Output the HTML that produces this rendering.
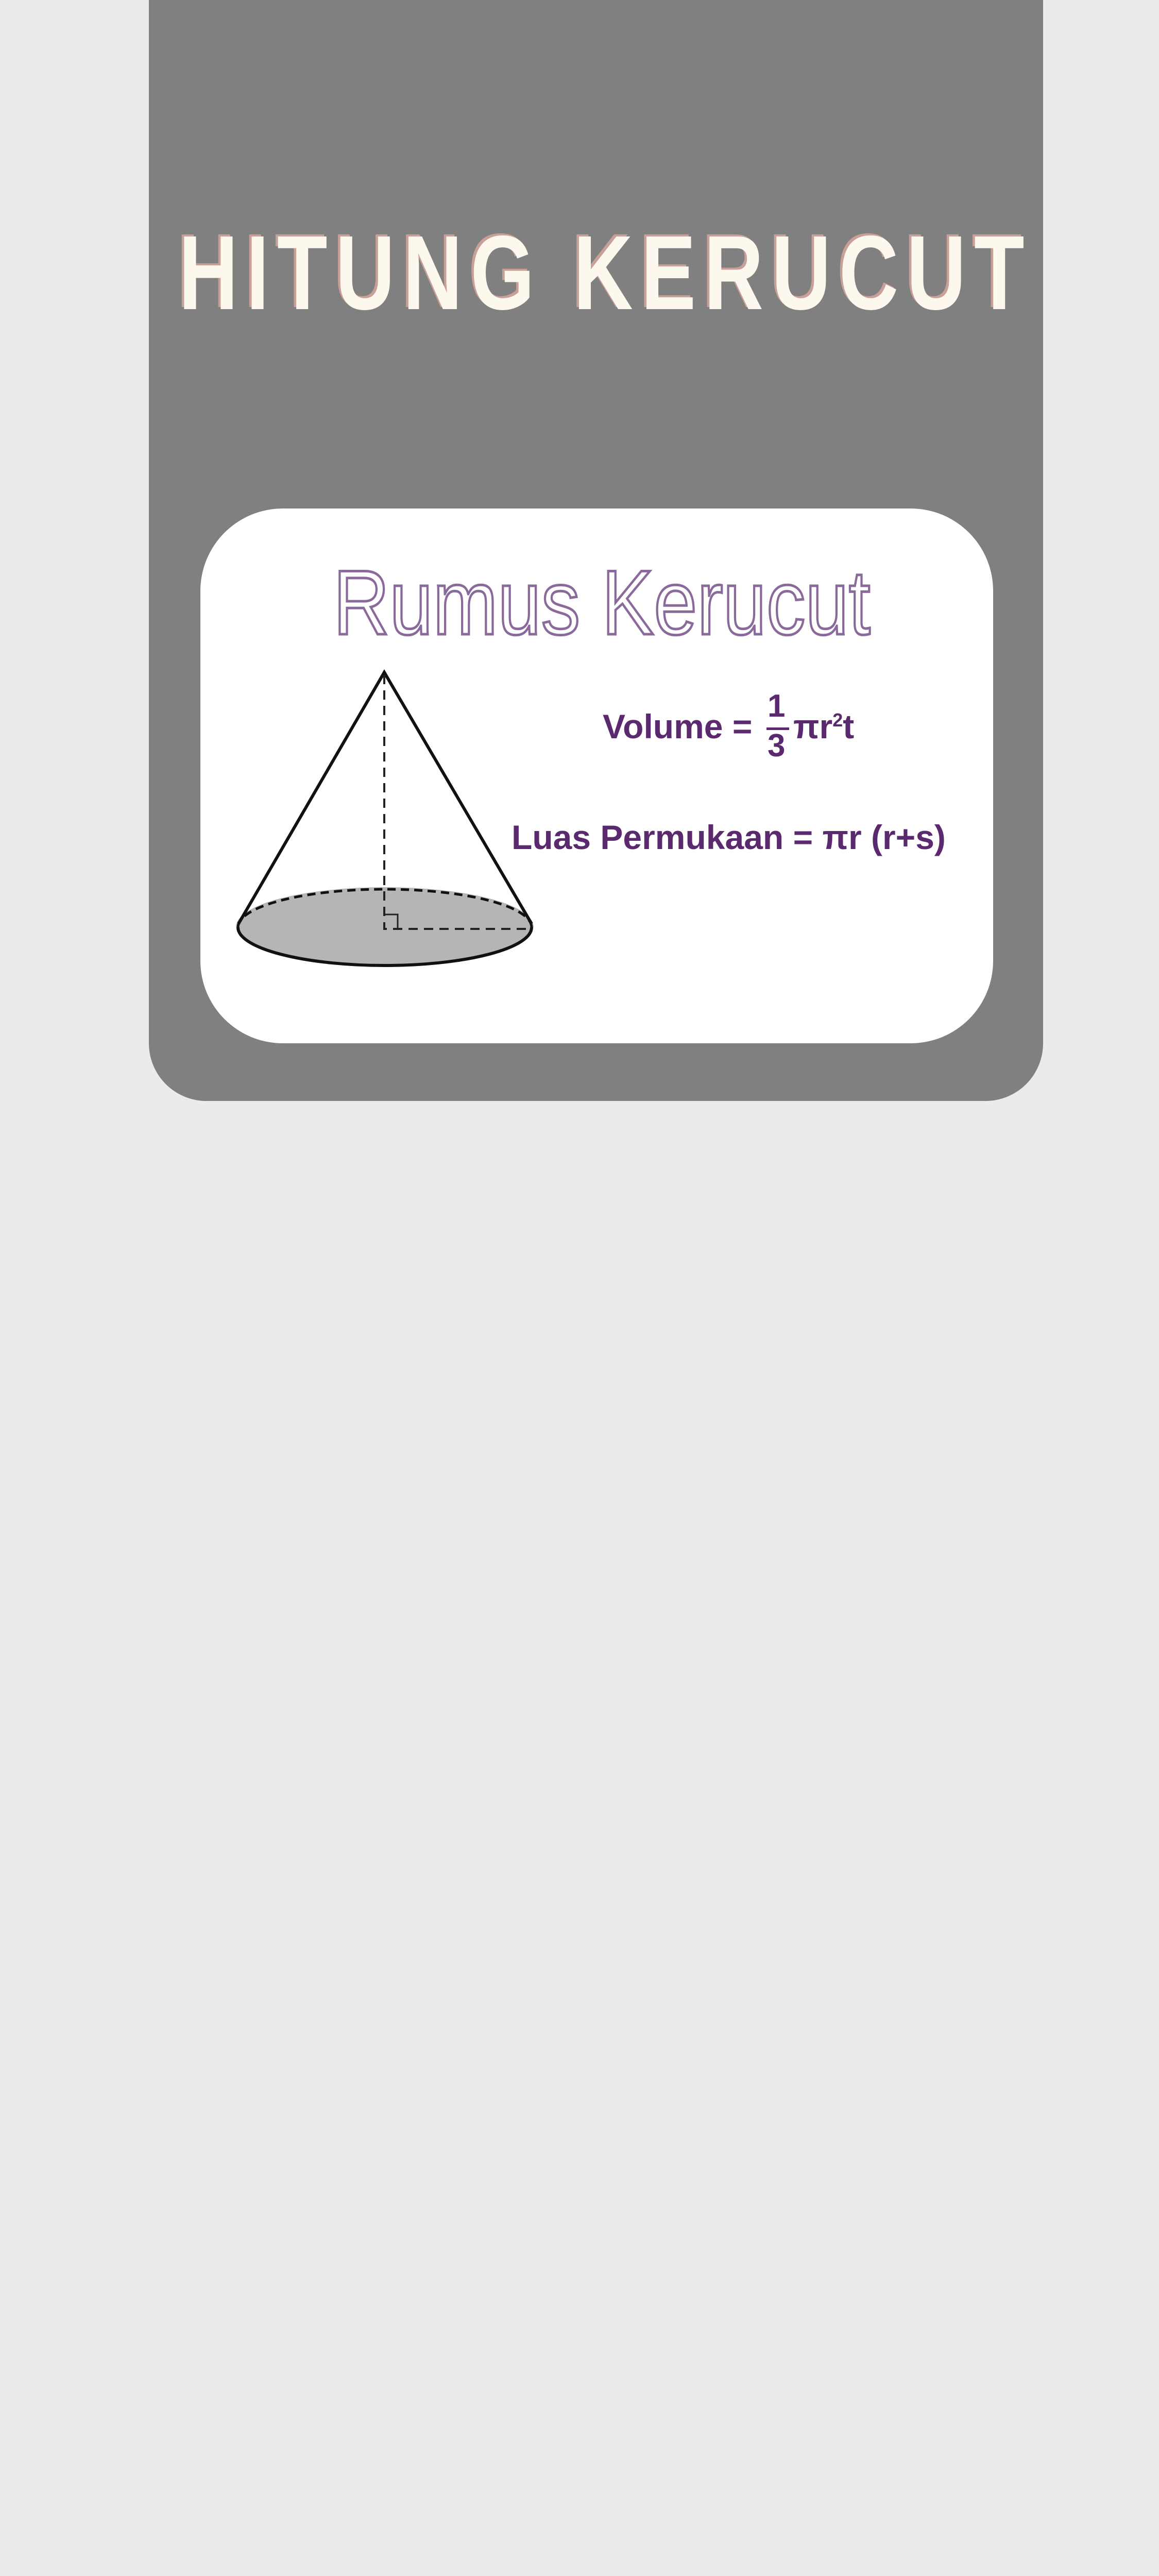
<!DOCTYPE html>
<html><head><meta charset="utf-8"><style>
html,body{margin:0;padding:0}
body{width:2250px;height:5038px;background:#ebebeb;position:relative;overflow:hidden;font-family:"Liberation Sans",sans-serif}
.panel{position:absolute;left:289px;top:0;width:1736px;height:2137px;background:#808080;border-radius:0 0 112px 112px}
.title{position:absolute;left:0;width:2250px;height:260px;overflow:hidden;top:420px;text-align:center;font-weight:bold;font-size:205px;line-height:220px;color:#fdf8ee;letter-spacing:20px;text-shadow:-6px -4px 0 #c9a097;white-space:nowrap}
.title span{display:inline-block;transform:scaleX(0.78);position:relative;left:50px}
.card{position:absolute;left:389px;top:987px;width:1539px;height:1038px;background:#fff;border-radius:160px}
.rk{position:absolute;left:0;width:2250px;top:1075px;text-align:center;font-size:178px;line-height:190px;color:#fff;-webkit-text-stroke:5px #8a6a9a;white-space:nowrap;overflow:hidden}
.rk span{display:inline-block;transform:scaleX(0.85);position:relative;left:43px}
.f{position:absolute;font-weight:bold;color:#5b2a6e;font-size:66px;white-space:nowrap}
</style></head><body>
<div class="panel"></div>
<div class="title"><span>HITUNG KERUCUT</span></div>
<div class="card"></div>
<div class="rk"><span>Rumus Kerucut</span></div>
<svg style="position:absolute;left:0;top:0" width="2250" height="2200">
<ellipse cx="747" cy="1800" rx="285" ry="74" fill="#b5b5b5" stroke="#111" stroke-width="6"/>
<path d="M462 1800 A285 74 0 0 1 1032 1800" fill="none" stroke="#b5b5b5" stroke-width="8"/>
<path d="M462 1800 A285 74 0 0 1 1032 1800" fill="none" stroke="#111" stroke-width="5" stroke-dasharray="16 10"/>
<path d="M463 1793 L746 1305 L1032 1793" fill="none" stroke="#111" stroke-width="6"/>
<path d="M746 1310 L746 1803 L1032 1803" fill="none" stroke="#222" stroke-width="4" stroke-dasharray="18 12"/>
<path d="M746 1775 L772 1775 L772 1803" fill="none" stroke="#222" stroke-width="3"/>
</svg>
<div class="f" style="left:1170px;top:1372px">Volume =</div>
<div class="f" style="left:1490px;top:1335px;font-size:62px">1</div>
<div style="position:absolute;left:1488px;top:1412px;width:44px;height:5px;background:#5b2a6e"></div>
<div class="f" style="left:1490px;top:1412px;font-size:62px">3</div>
<div class="f" style="left:1540px;top:1372px">πr<sup style="font-size:36px">2</sup>t</div>
<div class="f" style="left:993px;top:1587px">Luas Permukaan = πr (r+s)</div>
</body></html>
